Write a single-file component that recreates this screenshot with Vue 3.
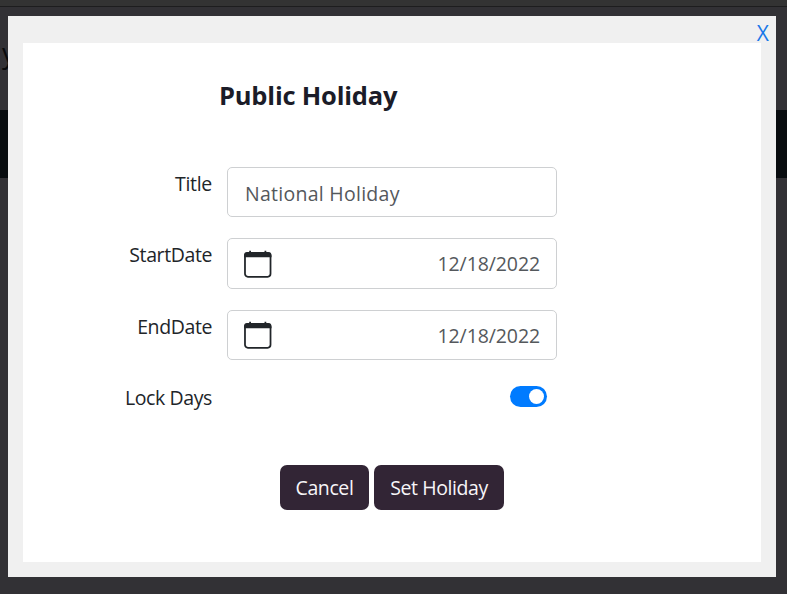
<script setup>
import { ref } from "vue";

const title = ref("National Holiday");
const dates = ref([
  { label: "StartDate", value: "12/18/2022" },
  { label: "EndDate", value: "12/18/2022" },
]);
const lockDays = ref(true);
</script>

<template>
  <div class="page">
    <div class="page-top"></div>
    <div class="page-heading">y</div>
    <div class="page-bar"></div>

    <div class="modal">
      <a class="close">X</a>
      <div class="panel">
        <h4 class="heading">Public Holiday</h4>

        <form class="form" @submit.prevent>
          <div class="row">
            <label class="label title-label">Title</label>
            <input v-model="title" class="control title-input" type="text" />
          </div>

          <div v-for="date in dates" :key="date.label" class="row" :class="date.label.toLowerCase()">
            <label class="label">{{ date.label }}</label>
            <div class="control date">
              <svg class="calendar" viewBox="0 0 28 28">
                <path class="calendar-pins" d="M6.2 0.5v3M21.8 0.5v3" />
                <rect class="calendar-frame" x="1" y="3" width="26" height="24" rx="3" />
                <path
                  class="calendar-head"
                  d="M0 7V5.2A3.4 3.4 0 0 1 3.4 1.8H24.6A3.4 3.4 0 0 1 28 5.2V7Z"
                />
              </svg>
              <span>{{ date.value }}</span>
            </div>
          </div>

          <div class="row lock">
            <label class="label">Lock Days</label>
            <div class="switch" :class="{ on: lockDays }" @click="lockDays = !lockDays">
              <div class="knob"></div>
            </div>
          </div>

          <div class="actions">
            <button class="btn cancel" type="button">Cancel</button>
            <button class="btn submit" type="submit">Set Holiday</button>
          </div>
        </form>
      </div>
    </div>
  </div>
</template>

<style>
body {
  margin: 0;
  overflow: hidden;
}
</style>

<style scoped>
* {
  box-sizing: border-box;
}

.page {
  position: relative;
  height: 594px;
  background: #323135;
  color: #212529;
  font-family: "Segoe UI", "Open Sans", sans-serif;
  font-size: 19.5px;
  overflow: hidden;
}

.page-top {
  height: 7px;
  background: #333333;
  border-bottom: 1px solid #1d1d1e;
}

.page-heading {
  height: 103px;
  padding-top: 28px;
  color: #08090b;
  font-size: 27px;
  line-height: 36px;
  text-indent: 2px;
}

.page-bar {
  height: 68px;
  background: #080c0f;
}

.modal {
  position: absolute;
  top: 16px;
  left: 8px;
  width: 768px;
  height: 561px;
  padding: 0 15px 15px;
  background: #f0f0f0;
}

.close {
  display: block;
  height: 27px;
  margin-right: -8px;
  color: #1877e8;
  font-size: 21px;
  line-height: 34px;
  text-align: right;
  cursor: pointer;
}

.panel {
  height: 519px;
  padding-top: 34px;
  background: #fff;
}

.heading {
  margin: 0 0 53px 196px;
  color: #1b1c28;
  font-size: 25.5px;
  font-weight: 700;
  line-height: 37px;
  letter-spacing: -0.2px;
}

.row {
  display: grid;
  grid-template-columns: 189px 330px;
  column-gap: 15px;
  height: 50px;
  margin-bottom: 21px;
}

.row.startdate {
  height: 51px;
}

.label {
  justify-self: end;
  line-height: 34px;
  letter-spacing: -0.4px;
  white-space: nowrap;
}

.title-label {
  letter-spacing: -0.3px;
}

.control {
  width: 100%;
  height: 100%;
  margin: 0;
  padding: 0 16px;
  border: 1px solid #ced0d2;
  border-radius: 5px;
  background: #fff;
  color: #54585c;
  font: inherit;
  outline: none;
}

.title-input {
  padding-top: 2px;
  padding-left: 17px;
  letter-spacing: 0.27px;
}

.date {
  display: flex;
  align-items: center;
  justify-content: space-between;
  letter-spacing: -0.1px;
}

.calendar {
  width: 27.5px;
  height: 28px;
}

.calendar-frame,
.calendar-pins {
  fill: none;
  stroke: #212529;
  stroke-width: 1.8;
}

.calendar-head {
  fill: #212529;
}

.lock {
  height: 84px;
  margin-bottom: 0;
}

.switch {
  justify-self: end;
  width: 37px;
  height: 21px;
  margin: 5px 10px 0 0;
  padding: 3px;
  border-radius: 11px;
  background: #adb5bd;
  cursor: pointer;
}

.switch.on {
  background: #007bff;
}

.knob {
  width: 15px;
  height: 15px;
  border-radius: 50%;
  background: #fff;
}

.on .knob {
  margin-left: 16px;
}

.actions {
  display: flex;
  gap: 5px;
  margin-left: 257px;
}

.btn {
  height: 45px;
  padding: 0;
  border: 0;
  border-radius: 7px;
  background: #322535;
  color: #f7f5f8;
  font: inherit;
  letter-spacing: -0.4px;
  white-space: nowrap;
}

.cancel {
  width: 89px;
}

.submit {
  width: 130px;
}
</style>
